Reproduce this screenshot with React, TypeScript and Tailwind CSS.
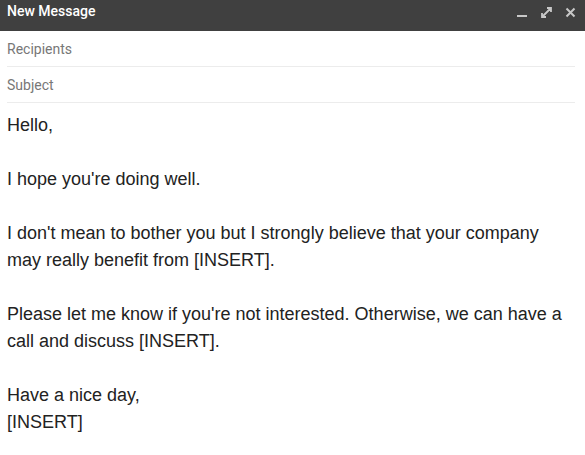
export default function App() {
  const paragraphs = [
    ["Hello,"],
    ["I hope you're doing well."],
    ["I don't mean to bother you but I strongly believe that your company may really benefit from [INSERT]."],
    ["Please let me know if you're not interested. Otherwise, we can have a call and discuss [INSERT]."],
    ["Have a nice day,", "[INSERT]"],
  ];

  return (
    <div className="w-[585px] h-[455px] bg-white overflow-hidden">
      <div className="flex h-[31px] items-start justify-between bg-[#404040] pl-[7px] pr-[9px]">
        <span className="pt-[1px] text-[14px] font-medium leading-[20px] text-white" style={{ fontFamily: "Roboto, sans-serif" }}>
          New Message
        </span>
        <div className="flex items-center gap-[13px] pt-[7px] text-[#c8c8c8]">
          <svg width="11" height="11" viewBox="0 0 11 11">
            <rect x="0" y="8" width="10" height="2" fill="currentColor" />
          </svg>
          <svg width="11" height="11" viewBox="0 0 11 11">
            <path d="M6 1h4v4M10 1L1 10M1 6v4h4" stroke="currentColor" strokeWidth="1.8" fill="none" />
          </svg>
          <svg width="11" height="11" viewBox="0 0 11 11">
            <path d="M1.5 1.5l8 8M9.5 1.5l-8 8" stroke="currentColor" strokeWidth="2" />
          </svg>
        </div>
      </div>
      <div className="ml-[7px] mr-[10px]" style={{ fontFamily: "Roboto, sans-serif" }}>
        <div className="flex h-[36px] items-center pt-[1px] border-b border-[#ececec] text-[14px] text-[#777]">Recipients</div>
        <div className="flex h-[36px] items-center pt-[1px] border-b border-[#ececec] text-[14px] text-[#777]">Subject</div>
      </div>
      <div
        className="flex flex-col gap-[27px] pl-[7px] pr-[20px] pt-[9px] text-[18px] leading-[27px] text-[#222]"
        style={{ fontFamily: '"Liberation Sans", Arial, sans-serif' }}
      >
        {paragraphs.map((lines, i) => (
          <p key={i}>
            {lines.map((line, j) => (
              <span key={j} className="block">
                {line}
              </span>
            ))}
          </p>
        ))}
      </div>
    </div>
  );
}
